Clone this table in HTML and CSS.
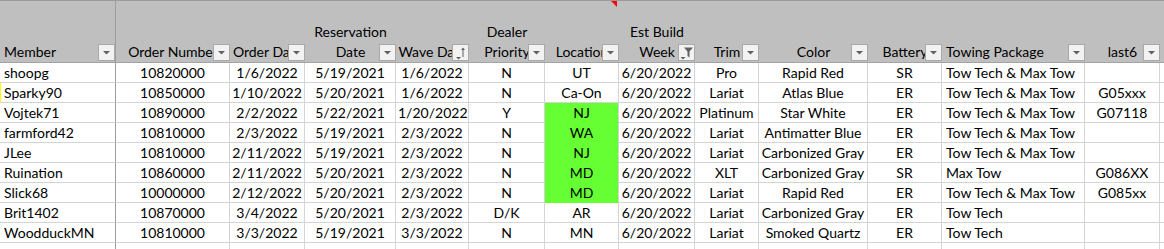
FILE: index.html
```html
<!DOCTYPE html>
<html>
<head>
<meta charset="utf-8">
<link rel="stylesheet" href="styles.css">
</head>
<body>
<div class="sheet">
  <div class="row head">
    <div class="c hc first left"><span class="ht">Member</span><span class="fb dd"><svg viewBox="0 0 15 15"><path d="M4 6h7l-3.5 3.5z"/></svg></span></div>
    <div class="c hc"><span class="ht">Order Number</span><span class="fb dd"><svg viewBox="0 0 15 15"><path d="M4 6h7l-3.5 3.5z"/></svg></span></div>
    <div class="c hc"><span class="ht">Order Date</span><span class="fb dd"><svg viewBox="0 0 15 15"><path d="M4 6h7l-3.5 3.5z"/></svg></span></div>
    <div class="c hc"><span class="ht">Reservation<br>Date</span><span class="fb dd"><svg viewBox="0 0 15 15"><path d="M4 6h7l-3.5 3.5z"/></svg></span></div>
    <div class="c hc"><span class="ht">Wave Date</span><span class="fb"><svg viewBox="0 0 15 15"><path d="M3 12h5l-2.5 2.5z"/><path d="M10 2.5l-2 2.5h1.5v7h1v-7h1.5z"/></svg></span></div>
    <div class="c hc"><span class="ht">Dealer<br>Priority</span><span class="fb dd"><svg viewBox="0 0 15 15"><path d="M4 6h7l-3.5 3.5z"/></svg></span></div>
    <div class="c hc"><span class="ht">Location</span><span class="fb dd"><svg viewBox="0 0 15 15"><path d="M4 6h7l-3.5 3.5z"/></svg></span><span class="note"></span></div>
    <div class="c hc"><span class="ht">Est Build<br>Week</span><span class="fb"><svg viewBox="0 0 15 15"><path d="M1.5 12h5l-2.5 2.5z"/><path d="M5 2.5h9l-3.5 4v6l-2-1.5v-4.5z"/></svg></span></div>
    <div class="c hc"><span class="ht">Trim</span><span class="fb dd"><svg viewBox="0 0 15 15"><path d="M4 6h7l-3.5 3.5z"/></svg></span></div>
    <div class="c hc"><span class="ht">Color</span><span class="fb dd"><svg viewBox="0 0 15 15"><path d="M4 6h7l-3.5 3.5z"/></svg></span></div>
    <div class="c hc"><span class="ht">Battery</span><span class="fb dd"><svg viewBox="0 0 15 15"><path d="M4 6h7l-3.5 3.5z"/></svg></span></div>
    <div class="c hc left"><span class="ht">Towing Package</span><span class="fb dd"><svg viewBox="0 0 15 15"><path d="M4 6h7l-3.5 3.5z"/></svg></span></div>
    <div class="c hc"><span class="ht">last6</span><span class="fb dd"><svg viewBox="0 0 15 15"><path d="M4 6h7l-3.5 3.5z"/></svg></span></div>
    <div class="c hc end"></div>
  </div>

  <div class="row">
    <div class="c first left">shoopg</div><div class="c">10820000</div><div class="c">1/6/2022</div><div class="c">5/19/2021</div><div class="c">1/6/2022</div><div class="c">N</div><div class="c">UT</div><div class="c">6/20/2022</div><div class="c">Pro</div><div class="c">Rapid Red</div><div class="c">SR</div><div class="c left">Tow Tech &amp; Max Tow</div><div class="c"></div><div class="c end"></div>
  </div>
  <div class="row">
    <div class="c first left mark">Sparky90</div><div class="c">10850000</div><div class="c">1/10/2022</div><div class="c">5/20/2021</div><div class="c">1/6/2022</div><div class="c">N</div><div class="c">Ca-On</div><div class="c">6/20/2022</div><div class="c">Lariat</div><div class="c">Atlas Blue</div><div class="c">ER</div><div class="c left">Tow Tech &amp; Max Tow</div><div class="c">G05xxx</div><div class="c end"></div>
  </div>
  <div class="row">
    <div class="c first left">Vojtek71</div><div class="c">10890000</div><div class="c">2/2/2022</div><div class="c">5/22/2021</div><div class="c">1/20/2022</div><div class="c">Y</div><div class="c green">NJ</div><div class="c">6/20/2022</div><div class="c">Platinum</div><div class="c">Star White</div><div class="c">ER</div><div class="c left">Tow Tech &amp; Max Tow</div><div class="c">G07118</div><div class="c end"></div>
  </div>
  <div class="row">
    <div class="c first left">farmford42</div><div class="c">10810000</div><div class="c">2/3/2022</div><div class="c">5/19/2021</div><div class="c">2/3/2022</div><div class="c">N</div><div class="c green">WA</div><div class="c">6/20/2022</div><div class="c">Lariat</div><div class="c">Antimatter Blue</div><div class="c">ER</div><div class="c left">Tow Tech &amp; Max Tow</div><div class="c"></div><div class="c end"></div>
  </div>
  <div class="row">
    <div class="c first left">JLee</div><div class="c">10810000</div><div class="c">2/11/2022</div><div class="c">5/19/2021</div><div class="c">2/3/2022</div><div class="c">N</div><div class="c green">NJ</div><div class="c">6/20/2022</div><div class="c">Lariat</div><div class="c">Carbonized Gray</div><div class="c">ER</div><div class="c left">Tow Tech &amp; Max Tow</div><div class="c"></div><div class="c end"></div>
  </div>
  <div class="row">
    <div class="c first left">Ruination</div><div class="c">10860000</div><div class="c">2/11/2022</div><div class="c">5/20/2021</div><div class="c">2/3/2022</div><div class="c">N</div><div class="c green">MD</div><div class="c">6/20/2022</div><div class="c">XLT</div><div class="c">Carbonized Gray</div><div class="c">SR</div><div class="c left">Max Tow</div><div class="c">G086XX</div><div class="c end"></div>
  </div>
  <div class="row">
    <div class="c first left">Slick68</div><div class="c">10000000</div><div class="c">2/12/2022</div><div class="c">5/20/2021</div><div class="c">2/3/2022</div><div class="c">N</div><div class="c green">MD</div><div class="c">6/20/2022</div><div class="c">Lariat</div><div class="c">Rapid Red</div><div class="c">ER</div><div class="c left">Tow Tech &amp; Max Tow</div><div class="c">G085xx</div><div class="c end"></div>
  </div>
  <div class="row">
    <div class="c first left">Brit1402</div><div class="c">10870000</div><div class="c">3/4/2022</div><div class="c">5/20/2021</div><div class="c">2/3/2022</div><div class="c">D/K</div><div class="c">AR</div><div class="c">6/20/2022</div><div class="c">Lariat</div><div class="c">Carbonized Gray</div><div class="c">ER</div><div class="c left">Tow Tech</div><div class="c"></div><div class="c end"></div>
  </div>
  <div class="row">
    <div class="c first left">WoodduckMN</div><div class="c">10810000</div><div class="c">3/3/2022</div><div class="c">5/19/2021</div><div class="c">3/3/2022</div><div class="c">N</div><div class="c">MN</div><div class="c">6/20/2022</div><div class="c">Lariat</div><div class="c">Smoked Quartz</div><div class="c">ER</div><div class="c left">Tow Tech</div><div class="c"></div><div class="c end"></div>
  </div>
  <div class="row">
    <div class="c first left"></div><div class="c"></div><div class="c"></div><div class="c"></div><div class="c"></div><div class="c"></div><div class="c"></div><div class="c"></div><div class="c"></div><div class="c"></div><div class="c"></div><div class="c left"></div><div class="c"></div><div class="c end"></div>
  </div>
</div>
</body>
</html>
```

FILE: styles.css
```css
html, body {
  margin: 0;
  padding: 0;
  background: #ffffff;
}
body {
  font-family: Lato, "Open Sans", sans-serif;
  font-size: 14px;
  color: #000;
  overflow: hidden;
}
.sheet {
  width: 1164px;
  height: 249px;
  overflow: hidden;
}
.row {
  display: grid;
  grid-template-columns: 116px 114px 75px 91px 73px 76px 74px 76px 64px 109px 74px 143px 75px 1fr;
  height: 20px;
}
.c {
  box-sizing: border-box;
  height: 20px;
  border-right: 1px solid #d4d4d4;
  border-bottom: 1px solid #d4d4d4;
  line-height: 19px;
  text-align: center;
  white-space: nowrap;
  overflow: hidden;
  padding: 0 2px;
}
.c.left {
  text-align: left;
  padding-left: 4px;
}
.c.first {
  border-right-color: #9e9e9e;
}
.c.end {
  border-right: none;
}
.c.mark {
  box-shadow: inset 1px 0 #ffff00;
}
.c.green {
  background: #66ff33;
  border-bottom-color: #66ff33;
}
.row.head {
  height: 63px;
  background: #bfbfbf;
  border-top: 1px solid #9b9b9b;
  box-sizing: border-box;
}
.hc {
  position: relative;
  height: 62px;
  border-right: none;
  border-bottom: 1px solid #a3a3a3;
  display: flex;
  flex-direction: column;
  justify-content: flex-end;
  padding-bottom: 0;
  line-height: 20px;
  white-space: nowrap;
}
.hc.first {
  border-right: 1px solid #9e9e9e;
}
.hc .ht {
  display: block;
}
.fb {
  position: absolute;
  right: 0;
  bottom: 1px;
  width: 17px;
  height: 17px;
  box-sizing: border-box;
  border: 1px solid #a9a9a9;
  background: #f2f2f2;
}
.fb svg {
  display: block;
  width: 15px;
  height: 15px;
  fill: #606060;
}
.note {
  position: absolute;
  top: 0;
  right: 2px;
  width: 0;
  height: 0;
  border-top: 6px solid #ff0000;
  border-left: 6px solid transparent;
}
```
